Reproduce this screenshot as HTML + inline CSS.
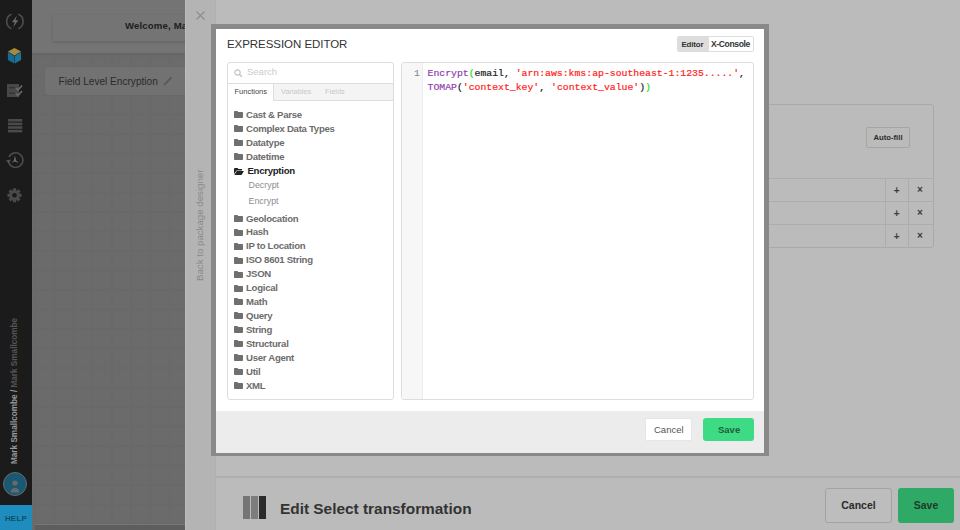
<!DOCTYPE html>
<html><head><meta charset="utf-8">
<style>
*{box-sizing:border-box;margin:0;padding:0}
html,body{width:960px;height:530px;overflow:hidden;background:#bbb;font-family:"Liberation Sans",sans-serif}
.abs{position:absolute}
#sidebar{left:0;top:0;width:32px;height:530px;background:#1b1b1b}
#main{left:32px;top:0;width:153px;height:530px;background-color:#6b6b6b;background-image:linear-gradient(#696969 2px,transparent 2px),linear-gradient(90deg,#696969 2px,transparent 2px);background-size:19.25px 19.5px;background-position:2px 16px}
#hdr{left:0;top:0;width:153px;height:55px;background:#747474;border-bottom:2px solid #666}
#welcome{left:21px;top:15px;width:140px;height:26px;background:#747474;box-shadow:0 1px 3px rgba(0,0,0,.16);font-size:9.6px;font-weight:bold;color:#1d1d1d;padding:0 0 0 72px;line-height:21.5px;letter-spacing:0.15px;white-space:nowrap;overflow:hidden}
#fle{left:13px;top:67px;width:150px;height:28px;background:#727272;border-radius:3px;box-shadow:0 0 1px rgba(0,0,0,.15);font-size:10.1px;color:#2b2b2b;line-height:30px;padding-left:13.5px;white-space:nowrap}
#side{left:185px;top:0;width:30px;height:530px;background:#b4b4b4;border-left:1px solid #bcbcbc}
#right{left:215px;top:0;width:745px;height:530px;background:#bbb;border-left:1px solid #b1b1b1}
#modal{left:211px;top:24px;width:558px;height:432px;background:#fff;border:5px solid #898989;border-bottom-width:3px}

.t{position:absolute;white-space:nowrap;line-height:1}
#title{left:227px;top:39px;font-size:11.5px;color:#333;letter-spacing:-0.05px}
#toggle{left:677px;top:36px;width:77px;height:16px;border:1px solid #ddd;border-radius:2px;background:#fff}
#tog-ed{left:0;top:0;width:31px;height:14px;background:#ddd}
#lp{left:227px;top:62px;width:167px;height:338px;border:1px solid #ddd;border-radius:3px;background:#fff}
#srch{left:0;top:0;width:165px;height:21px;border-bottom:1px solid #ddd}
#tabs{left:45px;top:21px;width:120px;height:17px;background:#f4f4f4;border-left:1px solid #ddd;border-bottom:1px solid #ddd}
#ce{left:401px;top:62px;width:353px;height:338px;border:1px solid #ddd;border-radius:3px;background:#fff;overflow:hidden}
#gut{left:0;top:0;width:21px;height:336px;background:#f7f7f7;border-right:1px solid #ececec}
#foot{left:216px;top:411px;width:548px;height:42px;background:#ececec}
#mcancel{left:645px;top:418px;width:47px;height:23px;background:#fff;border:1px solid #e6e6e6;border-radius:2px}
#msave{left:703px;top:418px;width:51px;height:23px;background:#3ddc84;border-radius:3px}
.fi{position:absolute;left:234px;width:9px;height:7px}
.it{left:246px;font-size:9.6px;font-weight:bold;color:#6c6c6c;letter-spacing:-0.28px}
.code{position:absolute;left:427.5px;font-family:"Liberation Mono",monospace;font-size:9.8px;font-weight:normal;-webkit-text-stroke:0.2px currentColor;white-space:pre;line-height:1}
.pu{color:#8e3fae}.rd{color:#ff2222}.gr{color:#22dd22}.bk{color:#222}

.ic{position:absolute;left:0;width:32px;height:32px}
#vtext{left:10.5px;top:463.5px;transform-origin:0 0;transform:rotate(-90deg);font-size:8.2px;font-weight:bold;color:#999;line-height:1;white-space:nowrap;margin-top:0}
#avatar{left:3px;top:472px;width:24px;height:24px;border-radius:50%;background:#1b5872;border:1.8px solid #686868;overflow:hidden}
#help{left:0;top:505px;width:32px;height:25px;background:#1e8dbd;color:#0e4d6b;font-size:7.9px;font-weight:bold;text-align:center;line-height:28px;letter-spacing:0.3px}
#back{left:195px;top:281px;transform-origin:0 0;transform:rotate(-90deg);font-size:9.7px;color:#8a8a8a;line-height:1;white-space:nowrap}
#rpanel{left:600px;top:104px;width:334px;height:144px;border:1px solid #a9a9a9;border-radius:3px}
.hl{position:absolute;height:1px;background:#adadad}
.vl{position:absolute;width:1px;background:#adadad}
#autofill{left:866px;top:127px;width:44px;height:21px;border:1px solid #a5a5a5;border-radius:2px;font-size:7.7px;font-weight:bold;color:#2b2b2b;text-align:center;line-height:19px}
.pm{position:absolute;font-size:10px;font-weight:bold;color:#3c3c3c;line-height:1}
#botline{left:215px;top:476px;width:745px;height:2px;background:#afafaf}
#bcancel{left:825px;top:488px;width:67px;height:35px;border:1px solid #a3a3a3;border-radius:3px;background:#bdbdbd;font-size:10.5px;font-weight:bold;color:#2a2a2a;text-align:center;line-height:33px}
#bsave{left:898px;top:488px;width:56px;height:35px;border-radius:3px;background:#2ea966;font-size:10.5px;font-weight:bold;color:#1e3b2a;text-align:center;line-height:35px}
#edt{left:280px;top:501px;font-size:15.4px;font-weight:bold;color:#333;line-height:1;white-space:nowrap}
</style></head><body>
<div id="sidebar" class="abs">
<svg class="ic" style="top:5px" viewBox="0 0 32 32"><path d="M11.5 9.3 A7.8 7.8 0 0 0 11.5 23.7" fill="none" stroke="#4e4e4e" stroke-width="1.6"/><path d="M18.3 9.3 A7.8 7.8 0 0 1 18.3 23.7" fill="none" stroke="#4e4e4e" stroke-width="1.6"/><path d="M16.8 10.8 L12 17.3 H14.8 L13.2 22.3 L18.3 15.3 H15.5Z" fill="#6c6c6c"/></svg>
<svg class="ic" style="top:40px" viewBox="0 0 32 32"><path d="M7.9 11.6 L14.5 7.9 L21.1 11.6 L14.5 15.6Z" fill="#a38b3d"/><path d="M7.9 12.1 L14.3 16 V23.5 L7.9 20Z" fill="#186b8f"/><path d="M21.1 12.1 L14.7 16 V23.5 L21.1 20Z" fill="#1a7499"/></svg>
<svg class="ic" style="top:74px" viewBox="0 0 32 32"><rect x="7" y="10" width="12" height="13" fill="#484848"/><rect x="9" y="13" width="6" height="1.3" fill="#333"/><rect x="9" y="18.5" width="6" height="1.3" fill="#333"/><path d="M16 14 L18 16 L22 11.5 M16 19.5 L18 21.5 L22 17" fill="none" stroke="#6a6a6a" stroke-width="1.6"/></svg>
<svg class="ic" style="top:109px" viewBox="0 0 32 32"><rect x="8" y="10" width="14.3" height="2.6" fill="#4a4a4a"/><rect x="8" y="13.6" width="14.3" height="2.6" fill="#4a4a4a"/><rect x="8" y="17.2" width="14.3" height="2.6" fill="#4a4a4a"/><rect x="8" y="20.8" width="14.3" height="2.6" fill="#4a4a4a"/></svg>
<svg class="ic" style="top:144px" viewBox="0 0 32 32"><g transform="translate(-0.6 0)"><path d="M9.3 18.5 A7.3 7.3 0 1 0 9.6 13" fill="none" stroke="#4c4c4c" stroke-width="1.6"/><path d="M6.5 16.5 L9.5 19.5 L11.5 15.5Z" fill="#555"/><path d="M15.5 11.5 L16.8 16.5 L19.5 19 L15 17.5 L12 19 L14.5 16.3Z" fill="#6a6a6a"/></g></svg>
<svg class="ic" style="top:179px" viewBox="0 0 32 32"><g transform="translate(14.5 16.3)" fill="#4a4a4a"><circle r="5.2"/><rect x="-1.6" y="-7" width="3.2" height="14"/><rect x="-1.6" y="-7" width="3.2" height="14" transform="rotate(45)"/><rect x="-1.6" y="-7" width="3.2" height="14" transform="rotate(90)"/><rect x="-1.6" y="-7" width="3.2" height="14" transform="rotate(135)"/><circle r="2.3" fill="#1b1b1b"/></g></svg>
<div id="vtext" class="abs">Mark Smallcombe / <span style="color:#555">Mark Smallcombe</span></div>
<div id="avatar" class="abs"><svg width="24" height="24" viewBox="0 0 24 24" style="position:absolute;left:-1.5px;top:-1.5px"><circle cx="12" cy="11" r="2.6" fill="#6a6a6a"/><path d="M7.8 20.5 Q7.8 16 12 16 Q16.2 16 16.2 20.5Z" fill="#6a6a6a"/></svg></div>
<div id="help" class="abs">HELP</div>
</div>
<div id="main" class="abs">
  <div id="hdr" class="abs"></div>
  <div id="welcome" class="abs">Welcome, Mark</div>
  <div class="abs" style="left:3px;top:524px;width:150px;height:1px;background:#767676"></div><div class="abs" style="left:3px;top:525px;width:150px;height:5px;background:#5e5e5e"></div>
<div id="fle" class="abs">Field Level Encryption</div>
<svg class="abs" style="left:130px;top:76px" width="11" height="10" viewBox="0 0 11 10"><path d="M2 9 L9.5 1.5" stroke="#5a5a5a" stroke-width="2"/></svg>
</div>
<div id="side" class="abs">
<svg class="abs" style="left:9.8px;top:10.5px" width="9" height="9" viewBox="0 0 9 9"><path d="M0.5 0.5 L8.5 8.5 M8.5 0.5 L0.5 8.5" stroke="#8e8e8e" stroke-width="1.2"/></svg>
</div>
<div id="back" class="abs">Back to package designer</div>
<div id="right" class="abs"></div>
<div id="rpanel" class="abs"></div>
<div class="hl" style="left:600px;top:178px;width:333px"></div>
<div class="hl" style="left:600px;top:201px;width:333px"></div>
<div class="hl" style="left:600px;top:224px;width:333px"></div>
<div class="vl" style="left:885px;top:178px;height:70px"></div>
<div class="vl" style="left:908px;top:178px;height:70px"></div>
<div id="autofill" class="abs">Auto-fill</div>
<div class="pm" style="left:893.8px;top:185.5px">+</div><div class="pm" style="left:893.8px;top:208.5px">+</div><div class="pm" style="left:893.8px;top:231.5px">+</div>
<div class="pm" style="left:917px;top:185px">&#215;</div><div class="pm" style="left:917px;top:208px">&#215;</div><div class="pm" style="left:917px;top:231px">&#215;</div>
<div id="botline" class="abs"></div>
<svg class="abs" style="left:243px;top:496px" width="23" height="23" viewBox="0 0 23 23"><rect x="0" y="0" width="7" height="23" fill="#757575"/><rect x="8" y="0" width="7" height="23" fill="#7d7d7d"/><rect x="16" y="0" width="7" height="23" fill="#2b2b2b"/></svg>
<div id="edt" class="abs">Edit Select transformation</div>
<div id="bcancel" class="abs">Cancel</div>
<div id="bsave" class="abs">Save</div>
<div id="modal" class="abs"></div>

<div id="title" class="t">EXPRESSION EDITOR</div>
<div id="toggle" class="abs"><div id="tog-ed" class="abs"></div></div>
<div class="t" style="left:681.5px;top:40.5px;font-size:7.9px;font-weight:bold;color:#333;letter-spacing:-0.15px">Editor</div>
<div class="t" style="left:711px;top:40px;font-size:8.6px;font-weight:bold;color:#333;letter-spacing:-0.4px">X-Console</div>
<div id="lp" class="abs"><div id="srch" class="abs"></div><div id="tabs" class="abs"></div></div>
<svg class="abs" style="left:233px;top:68px" width="10" height="10" viewBox="0 0 10 10"><circle cx="4.5" cy="4.5" r="2.7" fill="none" stroke="#c2c2c2" stroke-width="1.2"/><path d="M6.5 6.5 L8.8 8.8" stroke="#c2c2c2" stroke-width="1.3"/></svg>
<div class="t" style="left:247px;top:67px;font-size:9.5px;color:#ccc">Search</div>
<div class="t" style="left:234.5px;top:88px;font-size:7.5px;color:#444">Functions</div>
<div class="t" style="left:281px;top:88px;font-size:7.4px;color:#c8c8c8">Variables</div>
<div class="t" style="left:325px;top:88px;font-size:7.4px;color:#c8c8c8">Fields</div>
<svg class="fi" style="top:110.7px" viewBox="0 0 9 7"><path d="M0 0.8 Q0 0 0.8 0 H3.3 L4.3 1 H8.2 Q9 1 9 1.8 V6.2 Q9 7 8.2 7 H0.8 Q0 7 0 6.2Z" fill="#6f6f6f"/></svg><div class="t it" style="top:109.5px">Cast &amp; Parse</div>
<svg class="fi" style="top:124.7px" viewBox="0 0 9 7"><path d="M0 0.8 Q0 0 0.8 0 H3.3 L4.3 1 H8.2 Q9 1 9 1.8 V6.2 Q9 7 8.2 7 H0.8 Q0 7 0 6.2Z" fill="#6f6f6f"/></svg><div class="t it" style="top:123.5px">Complex Data Types</div>
<svg class="fi" style="top:138.7px" viewBox="0 0 9 7"><path d="M0 0.8 Q0 0 0.8 0 H3.3 L4.3 1 H8.2 Q9 1 9 1.8 V6.2 Q9 7 8.2 7 H0.8 Q0 7 0 6.2Z" fill="#6f6f6f"/></svg><div class="t it" style="top:137.5px">Datatype</div>
<svg class="fi" style="top:152.7px" viewBox="0 0 9 7"><path d="M0 0.8 Q0 0 0.8 0 H3.3 L4.3 1 H8.2 Q9 1 9 1.8 V6.2 Q9 7 8.2 7 H0.8 Q0 7 0 6.2Z" fill="#6f6f6f"/></svg><div class="t it" style="top:151.5px">Datetime</div>
<svg class="fi" style="top:214.7px" viewBox="0 0 9 7"><path d="M0 0.8 Q0 0 0.8 0 H3.3 L4.3 1 H8.2 Q9 1 9 1.8 V6.2 Q9 7 8.2 7 H0.8 Q0 7 0 6.2Z" fill="#6f6f6f"/></svg><div class="t it" style="top:213.5px">Geolocation</div>
<svg class="fi" style="top:228.6px" viewBox="0 0 9 7"><path d="M0 0.8 Q0 0 0.8 0 H3.3 L4.3 1 H8.2 Q9 1 9 1.8 V6.2 Q9 7 8.2 7 H0.8 Q0 7 0 6.2Z" fill="#6f6f6f"/></svg><div class="t it" style="top:227.4px">Hash</div>
<svg class="fi" style="top:242.6px" viewBox="0 0 9 7"><path d="M0 0.8 Q0 0 0.8 0 H3.3 L4.3 1 H8.2 Q9 1 9 1.8 V6.2 Q9 7 8.2 7 H0.8 Q0 7 0 6.2Z" fill="#6f6f6f"/></svg><div class="t it" style="top:241.4px">IP to Location</div>
<svg class="fi" style="top:256.6px" viewBox="0 0 9 7"><path d="M0 0.8 Q0 0 0.8 0 H3.3 L4.3 1 H8.2 Q9 1 9 1.8 V6.2 Q9 7 8.2 7 H0.8 Q0 7 0 6.2Z" fill="#6f6f6f"/></svg><div class="t it" style="top:255.4px">ISO 8601 String</div>
<svg class="fi" style="top:270.5px" viewBox="0 0 9 7"><path d="M0 0.8 Q0 0 0.8 0 H3.3 L4.3 1 H8.2 Q9 1 9 1.8 V6.2 Q9 7 8.2 7 H0.8 Q0 7 0 6.2Z" fill="#6f6f6f"/></svg><div class="t it" style="top:269.3px">JSON</div>
<svg class="fi" style="top:284.5px" viewBox="0 0 9 7"><path d="M0 0.8 Q0 0 0.8 0 H3.3 L4.3 1 H8.2 Q9 1 9 1.8 V6.2 Q9 7 8.2 7 H0.8 Q0 7 0 6.2Z" fill="#6f6f6f"/></svg><div class="t it" style="top:283.2px">Logical</div>
<svg class="fi" style="top:298.4px" viewBox="0 0 9 7"><path d="M0 0.8 Q0 0 0.8 0 H3.3 L4.3 1 H8.2 Q9 1 9 1.8 V6.2 Q9 7 8.2 7 H0.8 Q0 7 0 6.2Z" fill="#6f6f6f"/></svg><div class="t it" style="top:297.2px">Math</div>
<svg class="fi" style="top:312.3px" viewBox="0 0 9 7"><path d="M0 0.8 Q0 0 0.8 0 H3.3 L4.3 1 H8.2 Q9 1 9 1.8 V6.2 Q9 7 8.2 7 H0.8 Q0 7 0 6.2Z" fill="#6f6f6f"/></svg><div class="t it" style="top:311.1px">Query</div>
<svg class="fi" style="top:326.3px" viewBox="0 0 9 7"><path d="M0 0.8 Q0 0 0.8 0 H3.3 L4.3 1 H8.2 Q9 1 9 1.8 V6.2 Q9 7 8.2 7 H0.8 Q0 7 0 6.2Z" fill="#6f6f6f"/></svg><div class="t it" style="top:325.1px">String</div>
<svg class="fi" style="top:340.3px" viewBox="0 0 9 7"><path d="M0 0.8 Q0 0 0.8 0 H3.3 L4.3 1 H8.2 Q9 1 9 1.8 V6.2 Q9 7 8.2 7 H0.8 Q0 7 0 6.2Z" fill="#6f6f6f"/></svg><div class="t it" style="top:339.1px">Structural</div>
<svg class="fi" style="top:354.2px" viewBox="0 0 9 7"><path d="M0 0.8 Q0 0 0.8 0 H3.3 L4.3 1 H8.2 Q9 1 9 1.8 V6.2 Q9 7 8.2 7 H0.8 Q0 7 0 6.2Z" fill="#6f6f6f"/></svg><div class="t it" style="top:353.0px">User Agent</div>
<svg class="fi" style="top:368.1px" viewBox="0 0 9 7"><path d="M0 0.8 Q0 0 0.8 0 H3.3 L4.3 1 H8.2 Q9 1 9 1.8 V6.2 Q9 7 8.2 7 H0.8 Q0 7 0 6.2Z" fill="#6f6f6f"/></svg><div class="t it" style="top:366.9px">Util</div>
<svg class="fi" style="top:382.1px" viewBox="0 0 9 7"><path d="M0 0.8 Q0 0 0.8 0 H3.3 L4.3 1 H8.2 Q9 1 9 1.8 V6.2 Q9 7 8.2 7 H0.8 Q0 7 0 6.2Z" fill="#6f6f6f"/></svg><div class="t it" style="top:380.9px">XML</div>
<svg class="fi" style="top:167.5px;width:10px" viewBox="0 0 10 7"><path d="M0 1 Q0 0 1 0 H3.5 L4.5 1 H8 V2.5 H2.5 L0 6Z M2.8 3 H10 L7.5 7 H0.3Z" fill="#222"/></svg><div class="t it" style="top:165.5px;left:247.5px;color:#222">Encryption</div>
<div class="t" style="top:180.5px;left:248.5px;font-size:8.9px;color:#8e8e8e">Decrypt</div>
<div class="t" style="top:197px;left:248.5px;font-size:8.9px;color:#8e8e8e">Encrypt</div>

<div id="ce" class="abs"><div id="gut" class="abs"></div></div>
<div class="t" style="left:414px;top:69px;font-family:'Liberation Mono',monospace;font-size:9.7px;color:#858585">1</div>
<div class="code" style="top:69px"><span class="pu">Encrypt</span><span class="gr">(</span><span class="bk">email, </span><span class="rd">'arn:aws:kms:ap-southeast-1:1235.....'</span><span class="bk">,</span></div>
<div class="code" style="top:83px"><span class="pu">TOMAP</span><span class="bk">(</span><span class="rd">'context_key'</span><span class="bk">, </span><span class="rd">'context_value'</span><span class="bk">)</span><span class="gr">)</span></div>
<div id="foot" class="abs"></div>
<div id="mcancel" class="abs"></div>
<div class="t" style="left:654px;top:425px;font-size:9.5px;color:#555">Cancel</div>
<div id="msave" class="abs"></div>
<div class="t" style="left:718px;top:425px;font-size:9.5px;font-weight:bold;color:#235c3c">Save</div>

</body></html>
